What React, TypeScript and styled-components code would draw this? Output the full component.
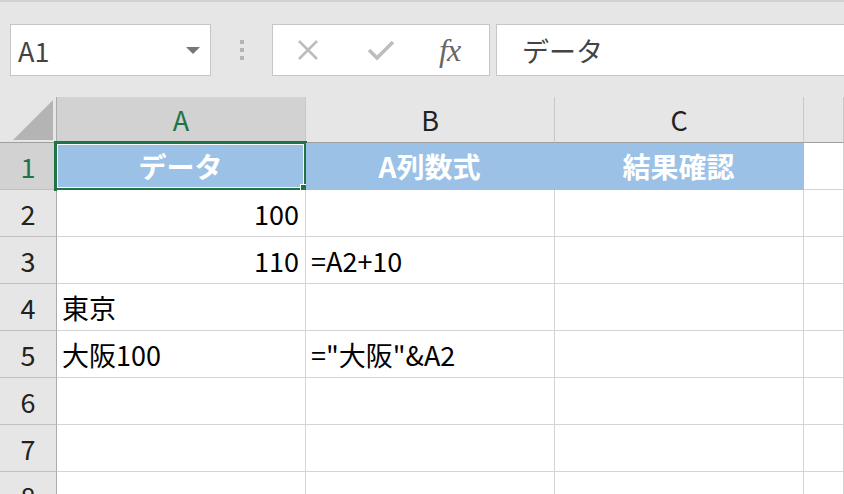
import { Fragment } from "react";
import styled, { createGlobalStyle } from "styled-components";

const GlobalStyle = createGlobalStyle`
  html, body {
    margin: 0;
    padding: 0;
    background: #e6e6e6;
  }
  #root {
    width: 844px;
    height: 494px;
    overflow: hidden;
  }
`;

const FONT = `"Noto Sans CJK JP", "Noto Sans", sans-serif`;

const Page = styled.div`
  width: 844px;
  height: 494px;
  overflow: hidden;
  background: #e6e6e6;
  font-family: ${FONT};
  display: flex;
  flex-direction: column;
`;

const Toolbar = styled.div`
  flex-shrink: 0;
  height: 97px;
  box-sizing: border-box;
  border-top: 2px solid #d2d2d2;
  padding: 22px 0 0 10px;
  display: flex;
  align-items: flex-start;
`;

const NameBox = styled.div`
  width: 201px;
  height: 52px;
  box-sizing: border-box;
  background: #fff;
  border: 1px solid #c6c6c6;
  display: flex;
  align-items: center;
  justify-content: space-between;
  padding: 0 10px 0 7px;
  font-size: 27px;
  color: #444;
`;

const Caret = styled.span`
  width: 0;
  height: 0;
  border-left: 7px solid transparent;
  border-right: 7px solid transparent;
  border-top: 7px solid #777;
`;

const Grip = styled.div`
  width: 61px;
  height: 52px;
  display: flex;
  flex-direction: column;
  align-items: center;
  justify-content: center;
  gap: 4px;
  span {
    width: 4px;
    height: 4px;
    background: #b4b4b4;
  }
`;

const FxButtons = styled.div`
  width: 218px;
  height: 52px;
  box-sizing: border-box;
  background: #fff;
  border: 1px solid #c6c6c6;
  display: flex;
  align-items: center;
  padding-left: 24px;
`;

const IconSlot = styled.div<{ $w: number }>`
  width: ${(p) => p.$w}px;
  height: 50px;
  display: flex;
  align-items: center;
`;

const FxLabel = styled.span`
  font-family: "Liberation Serif", "DejaVu Serif", serif;
  font-style: italic;
  font-size: 32px;
  color: #666;
  letter-spacing: -1px;
`;

const FormulaInput = styled.div`
  flex: 1;
  margin-left: 6px;
  height: 52px;
  box-sizing: border-box;
  background: #fff;
  border: 1px solid #c6c6c6;
  border-right: none;
  display: flex;
  align-items: center;
  padding-left: 25px;
  font-size: 27px;
  color: #444;
`;

const Grid = styled.div`
  flex-shrink: 0;
  display: grid;
  grid-template-columns: 57px 249px 249px 249px 1fr;
  grid-template-rows: 46px repeat(8, 47px);
  background: #fff;
`;

const Corner = styled.div`
  background: #e6e6e6;
  border-right: 1px solid #ababab;
  border-bottom: 1px solid #9e9e9e;
  display: flex;
  align-items: flex-end;
  justify-content: flex-end;
  padding: 0 3px 2px 0;
`;

const ColHead = styled.div<{ $active?: boolean }>`
  background: ${(p) => (p.$active ? "#d2d2d2" : "#e6e6e6")};
  border-right: 1px solid #c8c8c8;
  border-bottom: 1px solid #9e9e9e;
  display: flex;
  align-items: center;
  justify-content: center;
  font-size: 27px;
  color: ${(p) => (p.$active ? "#217346" : "#222")};
`;

const RowHead = styled.div<{ $active?: boolean }>`
  background: ${(p) => (p.$active ? "#d2d2d2" : "#e6e6e6")};
  border-right: 1px solid #ababab;
  border-bottom: 1px solid #c0c0c0;
  display: flex;
  align-items: center;
  justify-content: center;
  font-size: 27px;
  color: ${(p) => (p.$active ? "#217346" : "#222")};
`;

const Cell = styled.div<{ $fill?: string; $align?: "left" | "right" | "center"; $bold?: boolean }>`
  position: relative;
  background: ${(p) => p.$fill || "#fff"};
  border-right: 1px solid ${(p) => p.$fill || "#d4d4d4"};
  border-bottom: 1px solid ${(p) => p.$fill || "#d4d4d4"};
  display: flex;
  align-items: center;
  justify-content: ${(p) =>
    p.$align === "right" ? "flex-end" : p.$align === "center" ? "center" : "flex-start"};
  padding: 0 6px 0 5px;
  font-size: ${(p) => (p.$bold ? 28 : 27)}px;
  font-weight: ${(p) => (p.$bold ? 700 : 400)};
  color: ${(p) => (p.$fill ? "#fff" : "#000")};
  white-space: nowrap;
`;

const Selection = styled.div`
  position: absolute;
  left: -3px;
  top: -2px;
  right: -2px;
  bottom: -2px;
  border: 3px solid #217346;
  box-shadow: inset 0 0 0 1px #fff;
  pointer-events: none;
`;

const FillHandle = styled.div`
  position: absolute;
  right: -5px;
  bottom: -5px;
  width: 7px;
  height: 7px;
  background: #217346;
  border: 1px solid #fff;
`;

type CellData = { text?: string; align?: "left" | "right" | "center" };

const header: string[] = ["データ", "A列数式", "結果確認"];

const rows: CellData[][] = [
  [{ text: "100", align: "right" }, {}, {}],
  [{ text: "110", align: "right" }, { text: "=A2+10" }, {}],
  [{ text: "東京" }, {}, {}],
  [{ text: "大阪100" }, { text: '="大阪"&A2' }, {}],
  [{}, {}, {}],
  [{}, {}, {}],
  [{}, {}, {}],
];

function CornerMark() {
  return (
    <svg width="40" height="40" viewBox="0 0 40 40">
      <polygon points="40,0 40,40 0,40" fill="#b4b4b4" />
    </svg>
  );
}

function CrossIcon() {
  return (
    <svg width="22" height="22" viewBox="0 0 22 22">
      <path d="M2 2 L20 20 M20 2 L2 20" stroke="#bdbdbd" strokeWidth="2.6" fill="none" />
    </svg>
  );
}

function CheckIcon() {
  return (
    <svg width="28" height="22" viewBox="0 0 28 22">
      <path d="M2 11 L10 19 L26 3" stroke="#bdbdbd" strokeWidth="3.6" fill="none" />
    </svg>
  );
}

export default function App() {
  return (
    <>
      <GlobalStyle />
      <Page>
        <Toolbar>
          <NameBox>
            <span>A1</span>
            <Caret />
          </NameBox>
          <Grip>
            <span />
            <span />
            <span />
          </Grip>
          <FxButtons>
            <IconSlot $w={70}>
              <CrossIcon />
            </IconSlot>
            <IconSlot $w={72}>
              <CheckIcon />
            </IconSlot>
            <IconSlot $w={40}>
              <FxLabel>fx</FxLabel>
            </IconSlot>
          </FxButtons>
          <FormulaInput>データ</FormulaInput>
        </Toolbar>
        <Grid>
          <Corner>
            <CornerMark />
          </Corner>
          <ColHead $active>A</ColHead>
          <ColHead>B</ColHead>
          <ColHead>C</ColHead>
          <ColHead />

          <RowHead $active>1</RowHead>
          {header.map((h, i) => (
            <Cell key={h} $fill="#9bc2e6" $align="center" $bold>
              {h}
              {i === 0 && (
                <Selection>
                  <FillHandle />
                </Selection>
              )}
            </Cell>
          ))}
          <Cell />

          {rows.map((r, i) => (
            <Fragment key={i}>
              <RowHead>{i + 2}</RowHead>
              {r.map((c, j) => (
                <Cell key={j} $align={c.align}>
                  {c.text}
                </Cell>
              ))}
              <Cell />
            </Fragment>
          ))}
        </Grid>
      </Page>
    </>
  );
}
